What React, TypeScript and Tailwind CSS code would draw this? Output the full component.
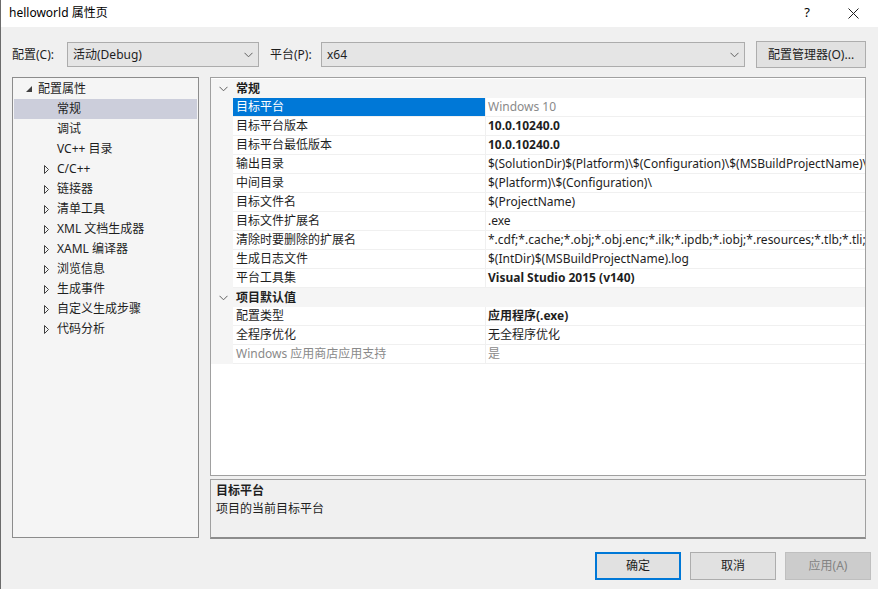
import React from "react";

const font = { fontFamily: '"Noto Sans", "Noto Sans CJK SC", sans-serif' };

function Chevron({ className = "" }: { className?: string }) {
  return (
    <svg width="9" height="6" viewBox="0 0 9 6" className={className}>
      <path d="M0.5 0.8 L4.5 4.8 L8.5 0.8" fill="none" stroke="#606060" strokeWidth="1" />
    </svg>
  );
}

function Expanded() {
  return (
    <svg width="6" height="6" viewBox="0 0 6 6">
      <path d="M6 0 L6 6 L0 6 Z" fill="#404040" />
    </svg>
  );
}

function Collapsed() {
  return (
    <svg width="5" height="9" viewBox="0 0 5 9">
      <path d="M0.5 0.5 L4.5 4.5 L0.5 8.5 Z" fill="none" stroke="#404040" strokeWidth="1" />
    </svg>
  );
}

const treeItems: { label: string; kind: "leaf" | "collapsed"; selected?: boolean }[] = [
  { label: "常规", kind: "leaf", selected: true },
  { label: "调试", kind: "leaf" },
  { label: "VC++ 目录", kind: "leaf" },
  { label: "C/C++", kind: "collapsed" },
  { label: "链接器", kind: "collapsed" },
  { label: "清单工具", kind: "collapsed" },
  { label: "XML 文档生成器", kind: "collapsed" },
  { label: "XAML 编译器", kind: "collapsed" },
  { label: "浏览信息", kind: "collapsed" },
  { label: "生成事件", kind: "collapsed" },
  { label: "自定义生成步骤", kind: "collapsed" },
  { label: "代码分析", kind: "collapsed" },
];

type Row = { name: string; value: string; bold?: boolean; gray?: boolean; nameGray?: boolean; selected?: boolean };

const section1: Row[] = [
  { name: "目标平台", value: "Windows 10", gray: true, selected: true },
  { name: "目标平台版本", value: "10.0.10240.0", bold: true },
  { name: "目标平台最低版本", value: "10.0.10240.0", bold: true },
  { name: "输出目录", value: "$(SolutionDir)$(Platform)\\$(Configuration)\\$(MSBuildProjectName)\\" },
  { name: "中间目录", value: "$(Platform)\\$(Configuration)\\" },
  { name: "目标文件名", value: "$(ProjectName)" },
  { name: "目标文件扩展名", value: ".exe" },
  { name: "清除时要删除的扩展名", value: "*.cdf;*.cache;*.obj;*.obj.enc;*.ilk;*.ipdb;*.iobj;*.resources;*.tlb;*.tli;*.tlh;*.tmp" },
  { name: "生成日志文件", value: "$(IntDir)$(MSBuildProjectName).log" },
  { name: "平台工具集", value: "Visual Studio 2015 (v140)", bold: true },
];

const section2: Row[] = [
  { name: "配置类型", value: "应用程序(.exe)", bold: true },
  { name: "全程序优化", value: "无全程序优化" },
  { name: "Windows 应用商店应用支持", value: "是", gray: true, nameGray: true },
];

function SectionHeader({ title }: { title: string }) {
  return (
    <div className="flex h-[19px] bg-[#f5f5f5] items-center shrink-0">
      <div className="w-[22px] flex justify-center pl-[2px]">
        <Chevron />
      </div>
      <div className="font-bold text-[12px] leading-[19px] text-[#1e1e1e] pl-[3px]">{title}</div>
    </div>
  );
}

function PropRow({ r }: { r: Row }) {
  return (
    <div className="flex h-[19px] shrink-0">
      <div className="w-[22px] bg-[#f5f5f5] shrink-0" />
      <div
        className={
          "w-[252px] shrink-0 pl-[3px] text-[12px] leading-[18px] border-b border-[#f0f0f0] whitespace-nowrap overflow-hidden " +
          (r.selected ? "bg-[#0078d7] text-white" : r.nameGray ? "text-[#8a8a8a]" : "text-[#1e1e1e]")
        }
      >
        {r.name}
      </div>
      <div
        className={
          "flex-1 pl-[2px] text-[12px] leading-[18px] border-b border-l border-[#f0f0f0] whitespace-nowrap overflow-hidden " +
          (r.bold ? "font-bold text-[#1e1e1e]" : r.gray ? "text-[#8a8a8a]" : "text-[#1e1e1e]")
        }
      >
        {r.value}
      </div>
    </div>
  );
}

export default function App() {
  return (
    <div
      className="w-[878px] h-[589px] bg-[#f0f0f0] border-l border-[#6b6b6b] flex flex-col text-[12px] text-[#1e1e1e] overflow-hidden"
      style={font}
    >
      {/* Title bar */}
      <div className="h-[27px] bg-white flex items-center pl-[8px] shrink-0">
        <div className="text-[12px] leading-[16px] text-black flex-1 pb-[2px]">helloworld 属性页</div>
        <div className="w-[40px] text-center text-[13px] text-black pb-[2px] mr-[6px]">?</div>
        <div className="w-[40px] flex justify-center mr-[5px]">
          <svg width="11" height="11" viewBox="0 0 11 11">
            <path d="M0.5 0.5 L10.5 10.5 M10.5 0.5 L0.5 10.5" stroke="#1e1e1e" strokeWidth="1" />
          </svg>
        </div>
      </div>

      {/* Config row */}
      <div className="flex items-center h-[27px] mt-[14px] pl-[11px] shrink-0">
        <div className="w-[55px] leading-[16px]">配置(C):</div>
        <div className="w-[192px] h-[25px] bg-[#e5e5e5] border border-[#acacac] flex items-center pl-[5px] pr-[5px]">
          <div className="flex-1 leading-[16px]">活动(Debug)</div>
          <Chevron />
        </div>
        <div className="ml-[11px] w-[51px] leading-[16px]">平台(P):</div>
        <div className="w-[424px] h-[25px] bg-[#e5e5e5] border border-[#acacac] flex items-center pl-[5px] pr-[5px]">
          <div className="flex-1 leading-[16px]">x64</div>
          <Chevron />
        </div>
        <div className="ml-[11px] w-[110px] h-[27px] bg-[#e1e1e1] border border-[#adadad] flex items-center justify-center leading-[16px]">
          配置管理器(O)...
        </div>
      </div>

      {/* Main */}
      <div className="flex mt-[9px] pl-[11px] shrink-0">
        {/* Tree */}
        <div className="w-[187px] h-[461px] bg-[#f5f5f5] border border-[#8c8c8c] pt-[1px] px-[1px]">
          <div className="h-[20px] flex items-center">
            <div className="w-[24px] flex justify-end pr-[6px]">
              <Expanded />
            </div>
            <div className="leading-[20px]">配置属性</div>
          </div>
          {treeItems.map((t) => (
            <div key={t.label} className={"h-[20px] flex items-center " + (t.selected ? "bg-[#cccedb]" : "")}>
              <div className="w-[43px] flex justify-end pr-[8px]">{t.kind === "collapsed" ? <Collapsed /> : null}</div>
              <div className="leading-[20px] whitespace-nowrap">{t.label}</div>
            </div>
          ))}
        </div>

        {/* Right column */}
        <div className="ml-[11px] w-[656px] flex flex-col">
          <div className="h-[399px] bg-white border border-[#a0a0a0] overflow-hidden flex flex-col pt-[1px]">
            <SectionHeader title="常规" />
            {section1.map((r) => (
              <PropRow key={r.name} r={r} />
            ))}
            <SectionHeader title="项目默认值" />
            {section2.map((r) => (
              <PropRow key={r.name} r={r} />
            ))}
          </div>
          <div className="mt-[3px] h-[60px] bg-[#f0f0f0] border border-[#a0a0a0] border-b-2 border-b-[#8c8c8c] pl-[5px] pt-[2px]">
            <div className="font-bold leading-[18px]">目标平台</div>
            <div className="leading-[18px]">项目的当前目标平台</div>
          </div>
        </div>
      </div>

      {/* Buttons */}
      <div className="flex mt-[13px] pl-[594px] gap-[9px] shrink-0">
        <div className="w-[86px] h-[28px] bg-[#e1e1e1] border-2 border-[#0078d7] flex items-center justify-center leading-[16px]">
          确定
        </div>
        <div className="w-[86px] h-[28px] bg-[#e1e1e1] border border-[#adadad] flex items-center justify-center leading-[16px]">
          取消
        </div>
        <div className="w-[86px] h-[28px] bg-[#cccccc] border border-[#bfbfbf] flex items-center justify-center leading-[16px] text-[#838383]">
          应用(A)
        </div>
      </div>
    </div>
  );
}
